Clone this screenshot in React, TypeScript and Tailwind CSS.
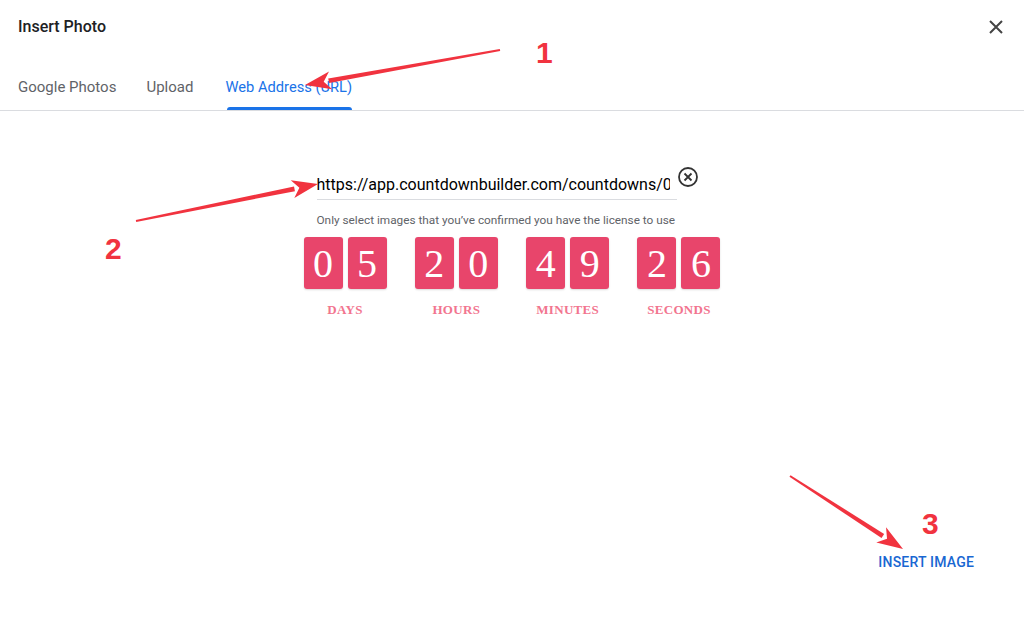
import React from "react";

const groups = [
  { digits: ["0", "5"], label: "DAYS" },
  { digits: ["2", "0"], label: "HOURS" },
  { digits: ["4", "9"], label: "MINUTES" },
  { digits: ["2", "6"], label: "SECONDS" },
];

type ArrowProps = { x1: number; y1: number; x2: number; y2: number };

// tapered red arrow used for the annotations
const Arrow = ({ x1, y1, x2, y2 }: ArrowProps) => {
  const dx = x2 - x1;
  const dy = y2 - y1;
  const len = Math.sqrt(dx * dx + dy * dy);
  const ux = dx / len;
  const uy = dy / len;
  const nx = -uy;
  const ny = ux;
  const head = 24;
  const hw = 9;
  const bx = x2 - ux * head;
  const by = y2 - uy * head;
  const shaft = [
    [x1 + nx * 1, y1 + ny * 1],
    [bx + nx * 2.4, by + ny * 2.4],
    [bx - nx * 2.4, by - ny * 2.4],
    [x1 - nx * 1, y1 - ny * 1],
  ];
  const tip = [
    [x2, y2],
    [bx + nx * hw - ux * 2, by + ny * hw - uy * 2],
    [bx + ux * 5, by + uy * 5],
    [bx - nx * hw - ux * 2, by - ny * hw - uy * 2],
  ];
  const pts = (p: number[][]) => p.map((q) => q.join(",")).join(" ");
  return (
    <g fill="#f1333f">
      <polygon points={pts(shaft)} />
      <polygon points={pts(tip)} />
    </g>
  );
};

function CountdownGroup({ digits, label }: { digits: string[]; label: string }) {
  return (
    <div className="flex flex-col items-center">
      <div className="flex gap-[5px]">
        {digits.map((d, i) => (
          <div
            key={i}
            className="flex h-[52px] w-[39px] items-center justify-center rounded-[3px] bg-[#e8456b] pt-[2px] text-[40px] leading-none text-white shadow-[0_1px_2px_rgba(0,0,0,0.15)]"
            style={{ fontFamily: '"Liberation Serif", "DejaVu Serif", serif' }}
          >
            {d}
          </div>
        ))}
      </div>
      <div
        className="mt-[11px] text-[13px] font-bold tracking-[0.3px] text-[#f2758f]"
        style={{ fontFamily: '"Liberation Serif", serif' }}
      >
        {label}
      </div>
    </div>
  );
}

export default function App() {
  return (
    <div
      className="relative h-[621px] w-full overflow-hidden bg-white"
      style={{ fontFamily: 'Roboto, "Liberation Sans", sans-serif' }}
    >
      {/* header */}
      <div className="flex h-[52px] items-center justify-between pl-[18px] pr-[20px] pt-[2px]">
        <h1 className="text-[16px] font-medium text-[#202124]">Insert Photo</h1>
        <button className="text-[#444]">
          <svg width="16" height="16" viewBox="0 0 16 16">
            <path d="M2 2L14 14M14 2L2 14" stroke="currentColor" strokeWidth="2" />
          </svg>
        </button>
      </div>

      {/* tabs */}
      <div className="flex h-[59px] border-b border-[#dadce0] pl-[18px]">
        <div className="flex items-end pb-[14px] text-[15px] leading-[18px] text-[#5f6368]">Google Photos</div>
        <div className="ml-[30px] flex items-end pb-[14px] text-[15px] leading-[18px] text-[#5f6368]">Upload</div>
        <div className="relative ml-[32px] flex items-end pb-[14px] text-[14.7px] leading-[18px] text-[#1a73e8]">
          Web Address (URL)
          <div className="absolute bottom-0 left-[2px] right-0 h-[3px] rounded-t-[3px] bg-[#1a73e8]" />
        </div>
      </div>

      {/* content */}
      <div className="flex flex-col items-center pt-[62px]">
        <div className="w-[417px]">
          <div className="ml-[13px] flex items-start">
            <div className="w-[360px] border-b border-[#dadce0] pb-[2px]">
              <div className="w-[353px] overflow-hidden whitespace-nowrap text-[16px] leading-[24px] text-black">
                https://app.countdownbuilder.com/countdowns/0
              </div>
            </div>
            <svg className="mt-[-7px]" width="22" height="22" viewBox="0 0 22 22">
              <circle cx="11" cy="11" r="9" fill="none" stroke="#333" strokeWidth="1.8" />
              <path d="M7.5 7.5L14.5 14.5M14.5 7.5L7.5 14.5" stroke="#333" strokeWidth="1.8" />
            </svg>
          </div>
          <div className="ml-[13px] mt-[12px] whitespace-nowrap text-[11.8px] text-[#5f6368]">
            Only select images that you’ve confirmed you have the license to use
          </div>
          <div className="mt-[7px] flex justify-between">
            {groups.map((g) => (
              <CountdownGroup key={g.label} {...g} />
            ))}
          </div>
        </div>
      </div>

      {/* footer action */}
      <div className="absolute bottom-[47px] right-[50px]">
        <button className="text-[14px] font-medium tracking-[0.2px] text-[#1967d2]">INSERT IMAGE</button>
      </div>

      {/* annotations */}
      <svg className="pointer-events-none absolute left-0 top-0" width="1024" height="621">
        <Arrow x1={500} y1={50} x2={305} y2={85} />
        <Arrow x1={136} y1={221} x2={318} y2={184} />
        <Arrow x1={790} y1={476} x2={903} y2={549} />
      </svg>
      <div
        className="pointer-events-none absolute left-[536px] top-[30px] text-[30px] font-bold text-[#f1333f]"
        style={{ fontFamily: '"Liberation Sans", sans-serif' }}
      >
        1
      </div>
      <div
        className="pointer-events-none absolute left-[105px] top-[226px] text-[30px] font-bold text-[#f1333f]"
        style={{ fontFamily: '"Liberation Sans", sans-serif' }}
      >
        2
      </div>
      <div
        className="pointer-events-none absolute left-[922px] top-[501px] text-[30px] font-bold text-[#f1333f]"
        style={{ fontFamily: '"Liberation Sans", sans-serif' }}
      >
        3
      </div>
    </div>
  );
}
